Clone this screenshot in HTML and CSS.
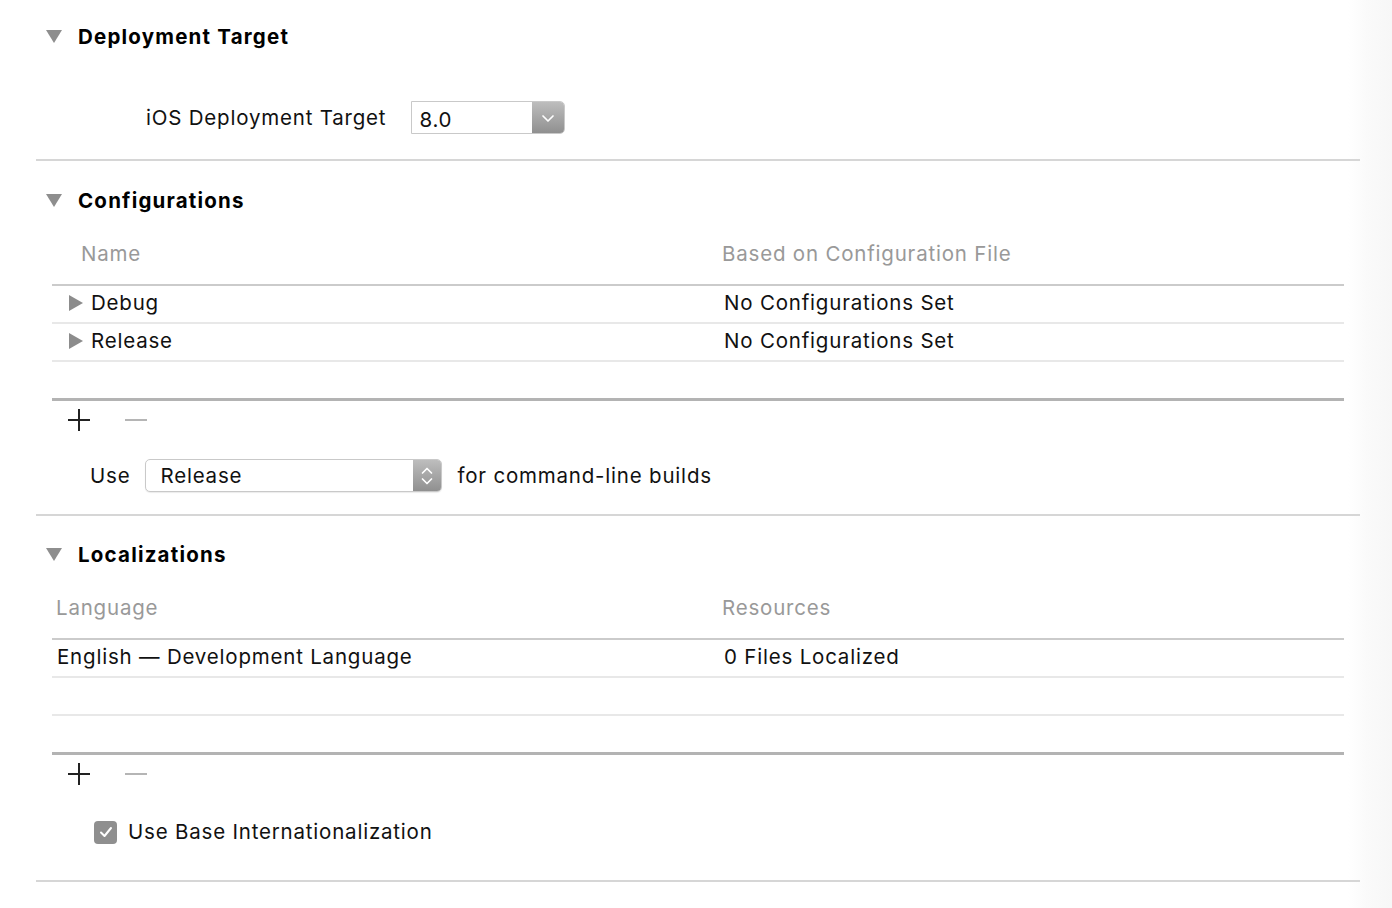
FILE: index.html
```html
<!DOCTYPE html>
<html lang="en">
<head>
    <meta charset="UTF-8">
    <meta name="viewport" content="width=device-width, initial-scale=1.0">
    <title>Project Info</title>
    <link rel="stylesheet" href="styles.css">
</head>
<body>
    <main class="editor">
        <section class="group group-deploy">
            <h2 class="group-title"><span class="disclosure"></span>Deployment Target</h2>
            <div class="field-row deploy-row">
                <label class="field-label">iOS Deployment Target</label>
                <div class="popup popup-combo">
                    <span class="popup-value">8.0</span>
                    <span class="popup-arrow">
                        <svg width="14" height="10" viewBox="0 0 14 10"><path d="M2 3 L7 8 L12 3" fill="none" stroke="#fff" stroke-width="1.7" stroke-linecap="round" stroke-linejoin="round"/></svg>
                    </span>
                </div>
            </div>
        </section>

        <section class="group group-configs">
            <h2 class="group-title"><span class="disclosure"></span>Configurations</h2>
            <div class="table">
                <div class="table-head">
                    <span class="col-name indent">Name</span>
                    <span class="col-file">Based on Configuration File</span>
                </div>
                <div class="table-row">
                    <span class="col-name"><span class="row-toggle"></span>Debug</span>
                    <span class="col-file">No Configurations Set</span>
                </div>
                <div class="table-row">
                    <span class="col-name"><span class="row-toggle"></span>Release</span>
                    <span class="col-file">No Configurations Set</span>
                </div>
                <div class="table-row empty no-line"></div>
            </div>
            <div class="table-tools">
                <span class="tool-add"></span>
                <span class="tool-remove"></span>
            </div>
            <div class="field-row use-row">
                <label class="field-label">Use</label>
                <div class="popup popup-select">
                    <span class="popup-value">Release</span>
                    <span class="popup-arrow stepper">
                        <svg width="14" height="24" viewBox="0 0 14 24"><path d="M2.5 9 L7 4.5 L11.5 9 M2.5 15 L7 19.5 L11.5 15" fill="none" stroke="#fff" stroke-width="1.7" stroke-linecap="round" stroke-linejoin="round"/></svg>
                    </span>
                </div>
                <span class="field-label">for command-line builds</span>
            </div>
        </section>

        <section class="group group-locales">
            <h2 class="group-title"><span class="disclosure"></span>Localizations</h2>
            <div class="table">
                <div class="table-head">
                    <span class="col-name plain">Language</span>
                    <span class="col-file">Resources</span>
                </div>
                <div class="table-row">
                    <span class="col-name plain">English — Development Language</span>
                    <span class="col-file">0 Files Localized</span>
                </div>
                <div class="table-row empty"></div>
                <div class="table-row empty no-line"></div>
            </div>
            <div class="table-tools">
                <span class="tool-add"></span>
                <span class="tool-remove"></span>
            </div>
            <label class="check-row">
                <span class="checkbox">
                    <svg width="16" height="14" viewBox="0 0 16 14"><path d="M3 7.5 L6.5 11 L13 3" fill="none" stroke="#fff" stroke-width="2" stroke-linecap="round" stroke-linejoin="round"/></svg>
                </span>
                Use Base Internationalization
            </label>
        </section>
    </main>
</body>
</html>
```

FILE: styles.css
```css
body {
    margin: 0;
    padding: 0;
    height: 908px;
    overflow: hidden;
    font-family: Inter, "Noto Sans", sans-serif;
    font-size: 20.5px;
    letter-spacing: 0.8px;
    color: #111;
    background: linear-gradient(to right, #fff 1348px, #fafafa 1366px, #f7f7f7);
}
.editor {
    width: 1324px;
    margin-left: 36px;
}
.group {
    border-bottom: 2px solid #d6d6d6;
}
.group-deploy {
    padding: 24px 0 25px;
}
.group-configs {
    padding: 27px 0 22px;
}
.group-locales {
    padding: 26px 0 36px;
}
.group-title {
    display: flex;
    align-items: center;
    margin: 0;
    height: 24px;
    font-size: 20.5px;
    font-weight: 700;
    letter-spacing: 1.2px;
    color: #000;
}
.disclosure {
    width: 0;
    height: 0;
    margin: 0 16px 0 10px;
    border-left: 8.5px solid transparent;
    border-right: 8.5px solid transparent;
    border-top: 13px solid #8e8e8e;
}
.field-row {
    display: flex;
    align-items: center;
}
.field-label {
    line-height: 24px;
}
.deploy-row {
    margin-top: 53px;
    padding-left: 110px;
    gap: 25px;
}
.use-row {
    margin-top: 20px;
    padding-left: 54px;
    gap: 15px;
}
.popup {
    display: flex;
    height: 33px;
    box-sizing: border-box;
    border: 1px solid #c9c9c9;
    background: #fff;
    overflow: hidden;
}
.popup-value {
    flex: 1;
    display: flex;
    align-items: center;
    padding-top: 3px;
}
.popup-combo {
    width: 154px;
    border-radius: 0 5px 5px 0;
}
.popup-combo .popup-value {
    padding-left: 7px;
}
.popup-select {
    width: 297px;
    border-radius: 5px;
    box-shadow: 0 1px 1px rgba(0, 0, 0, 0.08);
}
.popup-select .popup-value {
    padding-left: 14px;
    padding-top: 0;
}
.popup-arrow {
    width: 32px;
    display: flex;
    align-items: center;
    justify-content: center;
    background: linear-gradient(#bdbdbd, #909090);
}
.popup-arrow.stepper {
    width: 28px;
}
.table {
    margin: 18px 16px 0;
}
.table-head,
.table-row {
    display: grid;
    grid-template-columns: 670px 1fr;
    align-items: center;
}
.table-head {
    padding: 12px 0 18px;
    line-height: 24px;
    color: #999;
    border-bottom: 2px solid #cbcbcb;
}
.group-locales .table-head {
    padding-top: 30px;
}
.group-locales .table {
    margin-top: 0;
}
.table-row {
    box-sizing: border-box;
    height: 38px;
    padding-bottom: 4px;
    border-bottom: 2px solid #e8e8e8;
}
.table-row.no-line {
    border-bottom: none;
    height: 36px;
}
.col-name {
    display: flex;
    align-items: center;
    padding-left: 17px;
}
.col-name.indent {
    padding-left: 29px;
}
.col-name.plain {
    padding-left: 5px;
}
.table-head .col-name.plain {
    padding-left: 4px;
}
.col-file {
    padding-left: 2px;
}
.table-head .col-file {
    padding-left: 0;
}
.row-toggle {
    width: 0;
    height: 0;
    margin: 2px 8px 0 0;
    border-top: 8px solid transparent;
    border-bottom: 8px solid transparent;
    border-left: 14px solid #8c8c8c;
}
.table-tools {
    display: flex;
    align-items: center;
    height: 38px;
    margin: 0 16px;
    padding-left: 16px;
    gap: 35px;
    border-top: 3px solid;
    border-image: linear-gradient(#b3b3b3, #b3b3b3 66%, #d2d2d2 66%) 1;
}
.tool-add,
.tool-remove {
    position: relative;
    width: 22px;
    height: 22px;
}
.tool-add::before,
.tool-add::after,
.tool-remove::before {
    content: "";
    position: absolute;
    background: #222;
}
.tool-add::before {
    left: 0;
    right: 0;
    top: 10px;
    height: 2px;
}
.tool-add::after {
    top: 0;
    bottom: 0;
    left: 10px;
    width: 2px;
}
.tool-remove::before {
    left: 0;
    right: 0;
    top: 10px;
    height: 2px;
    background: #b5b5b5;
}
.check-row {
    display: flex;
    align-items: center;
    gap: 11px;
    margin-top: 27px;
    padding-left: 58px;
    line-height: 24px;
}
.checkbox {
    width: 23px;
    height: 23px;
    border-radius: 4px;
    background: #8f8f8f;
    display: flex;
    align-items: center;
    justify-content: center;
}
```
